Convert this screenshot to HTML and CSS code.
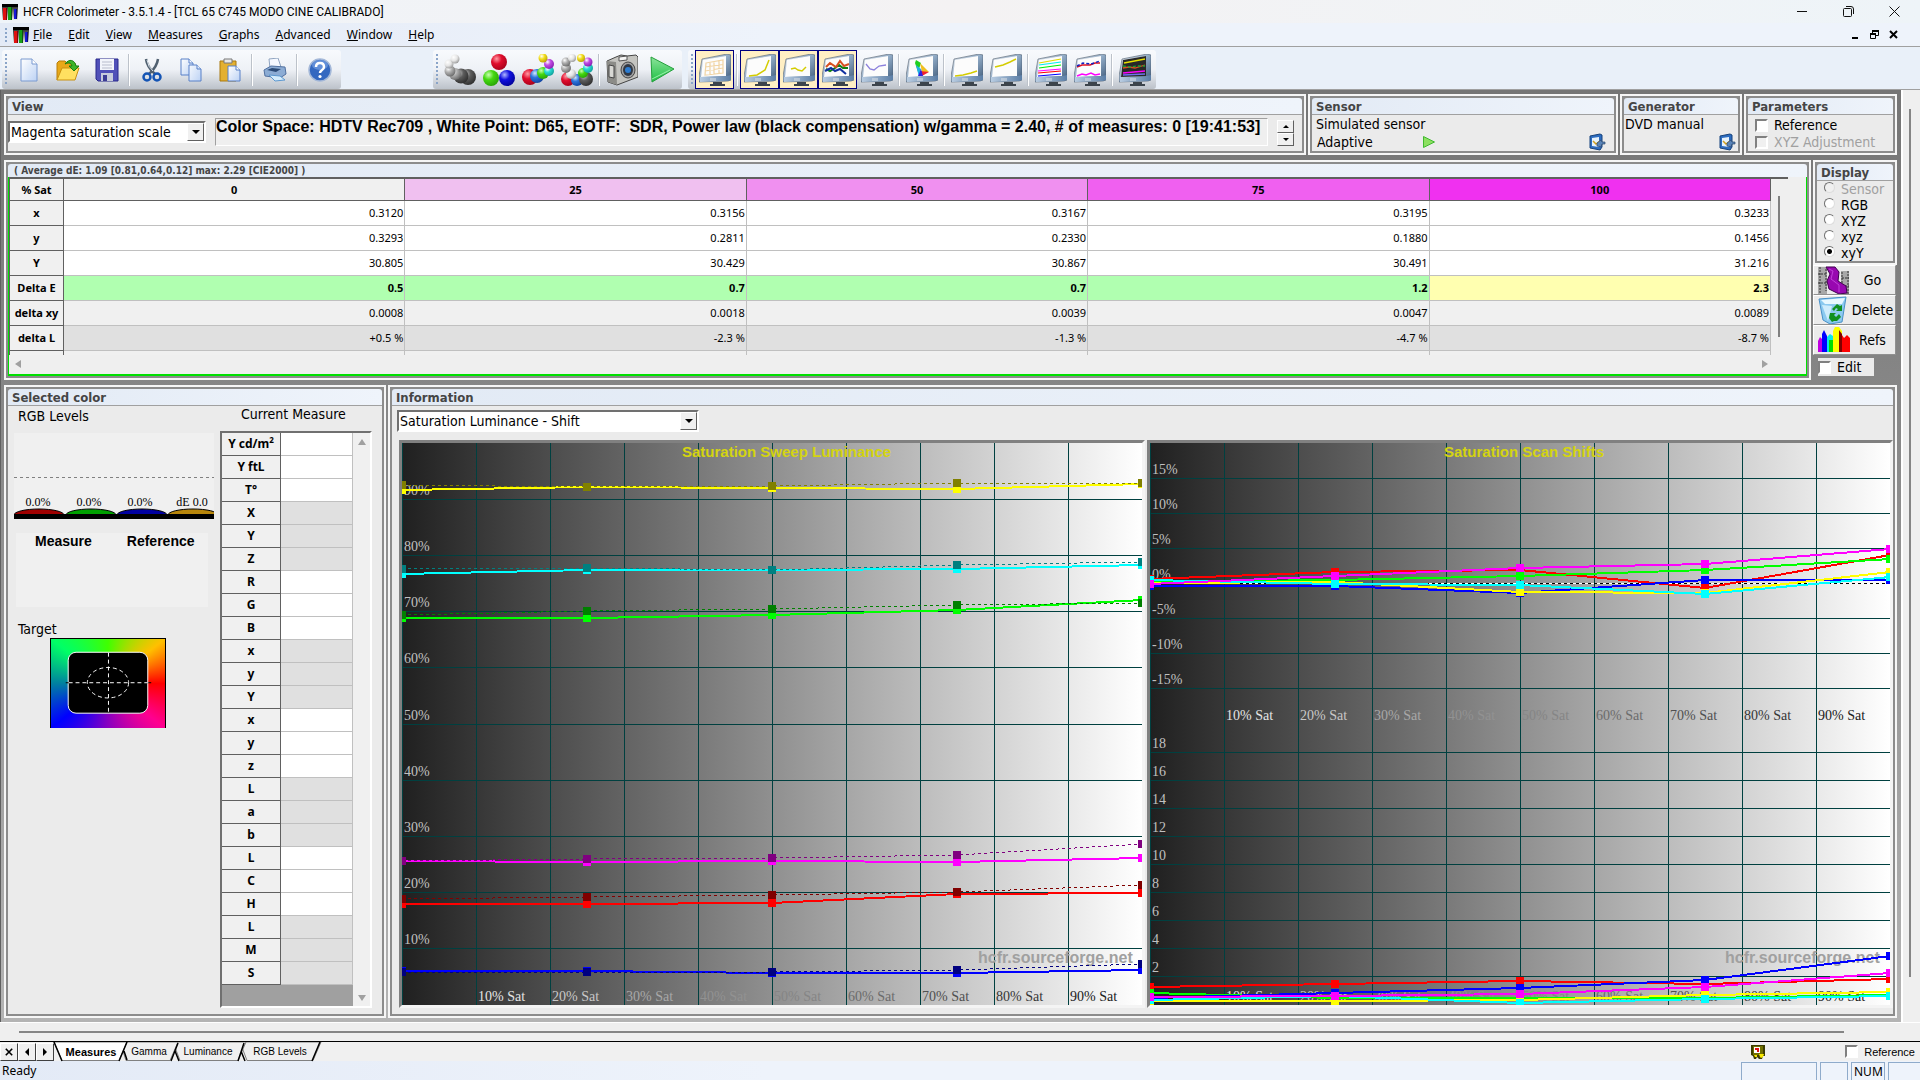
FILE: index.html
```html
<!DOCTYPE html>
<html lang="en">
<head>
<meta charset="utf-8">
<title>HCFR Colorimeter - 3.5.1.4</title>
<link rel="stylesheet" href="styles.css">
</head>
<body>
<svg class="defs" aria-hidden="true">
  <defs>
    <linearGradient id="gBezel" x1="0" y1="0" x2="1" y2="1"><stop offset="0" stop-color="#e8ecf0"/><stop offset=".5" stop-color="#8fa9c4"/><stop offset="1" stop-color="#3c5878"/></linearGradient>
    <linearGradient id="gBase" x1="0" y1="0" x2="1" y2="0"><stop offset="0" stop-color="#b9cde2"/><stop offset="1" stop-color="#5b7ea6"/></linearGradient>
    <linearGradient id="gPage" x1="0" y1="0" x2="1" y2="1"><stop offset="0" stop-color="#fff"/><stop offset="1" stop-color="#bcd2f4"/></linearGradient>
    <linearGradient id="gPlay" x1="0" y1="0" x2="0" y2="1"><stop offset="0" stop-color="#8be39a"/><stop offset="1" stop-color="#1fc045"/></linearGradient>
    <radialGradient id="sGray" cx=".35" cy=".3" r=".8"><stop offset="0" stop-color="#fff"/><stop offset=".4" stop-color="#b0b0b0"/><stop offset="1" stop-color="#606060"/></radialGradient>
    <radialGradient id="sLight" cx=".35" cy=".3" r=".8"><stop offset="0" stop-color="#fff"/><stop offset=".5" stop-color="#e4e4e4"/><stop offset="1" stop-color="#8c8c8c"/></radialGradient>
    <radialGradient id="sDark" cx=".35" cy=".3" r=".8"><stop offset="0" stop-color="#c8c8c8"/><stop offset=".4" stop-color="#5c5c5c"/><stop offset="1" stop-color="#282828"/></radialGradient>
    <radialGradient id="sRed" cx=".35" cy=".3" r=".8"><stop offset="0" stop-color="#ff9aa4"/><stop offset=".4" stop-color="#e00c2c"/><stop offset="1" stop-color="#a00018"/></radialGradient>
    <radialGradient id="sGreen" cx=".35" cy=".3" r=".8"><stop offset="0" stop-color="#c8ffb0"/><stop offset=".4" stop-color="#44d810"/><stop offset="1" stop-color="#249c04"/></radialGradient>
    <radialGradient id="sBlue" cx=".35" cy=".3" r=".8"><stop offset="0" stop-color="#b0b8ff"/><stop offset=".4" stop-color="#1010e0"/><stop offset="1" stop-color="#000090"/></radialGradient>
    <radialGradient id="sSky" cx=".35" cy=".3" r=".8"><stop offset="0" stop-color="#d4e8ff"/><stop offset=".4" stop-color="#2c74dc"/><stop offset="1" stop-color="#0c3c98"/></radialGradient>
    <radialGradient id="sYellow" cx=".35" cy=".3" r=".8"><stop offset="0" stop-color="#fff"/><stop offset=".4" stop-color="#f4e020"/><stop offset="1" stop-color="#b09800"/></radialGradient>
    <radialGradient id="sViolet" cx=".35" cy=".3" r=".8"><stop offset="0" stop-color="#fff"/><stop offset=".4" stop-color="#c04ce4"/><stop offset="1" stop-color="#8018a8"/></radialGradient>
    <radialGradient id="sCyan" cx=".35" cy=".3" r=".8"><stop offset="0" stop-color="#fff"/><stop offset=".4" stop-color="#28dcd4"/><stop offset="1" stop-color="#0c9490"/></radialGradient>
    <linearGradient id="gLogo" x1="0" y1="0" x2="0" y2="1"><stop offset="0" stop-color="#111"/><stop offset=".5" stop-color="#777"/><stop offset="1" stop-color="#f0f0f0"/></linearGradient>
    <symbol id="logo" viewBox="0 0 16 16"><path fill="url(#gLogo)" d="M0 0h16v16H0z"/><path fill="#000" d="M0 0h16v3H0z"/><path fill="#e01010" d="M1 4h4v12H1z"/><path fill="#18a018" d="M6 3h4v13H6z"/><path fill="#1818d8" d="M12 5h3v10h-3z"/><path fill="#000" opacity=".45" d="M4 4h1v12H4zM9 3h1v13H9zM14 5h1v10h-1z"/></symbol>
    <symbol id="monitor" viewBox="0 0 32 32"><path d="M3 5 28 0l4 1v25l-3 1-29 1v-6z" fill="url(#gBezel)" stroke="#52606e" stroke-width=".6"/><path d="m4 6 23-4v20L2 23z" fill="#fcfcfc"/><path d="m1 23 27-1 4-1v5l-3 1-28 1z" fill="url(#gBase)"/><path d="M11 24h6v3h-6z" fill="#e0e4e8" opacity=".5"/><path d="M14 28h9v2h3v2H11v-2h3z" fill="#3c444c"/></symbol>
    <symbol id="config" viewBox="0 0 18 18"><path d="m2 3 10-2 2 1v12l-2 3-10-2z" fill="#2c6cc0" stroke="#16427c"/><path d="m4 5 7-1v10l-7-1z" fill="#e6f2fc"/><path d="m5 8 3 3 4-3" fill="none" stroke="#d0a020" stroke-width="1.500"/><path d="m9 10 4-3 1 2h3v2h-3l-1 3-4-1z" fill="#5a84b8" stroke="#2c486c" stroke-width=".7"/></symbol>
  </defs>
</svg>

<div class="app">
  <header class="titlebar">
    <svg class="logo"><use href="#logo"/></svg>
    <h1>HCFR Colorimeter - 3.5.1.4 - [TCL 65 C745 MODO CINE CALIBRADO]</h1>
    <div class="caption">
      <button aria-label="Minimize"><svg viewBox="0 0 11 11"><path d="M0 5.500h10" stroke="#111"/></svg></button>
      <button aria-label="Restore"><svg viewBox="0 0 11 11"><g fill="none" stroke="#111"><rect x=".5" y="2.500" width="8" height="8" rx="1"/><path d="M3 .5h5q2.500 0 2.500 2.500v5"/></g></svg></button>
      <button aria-label="Close"><svg viewBox="0 0 11 11"><path d="m.5.5 10 10m0-10-10 10" stroke="#111"/></svg></button>
    </div>
  </header>

  <nav class="menubar">
    <span class="grip"></span><svg class="logo"><use href="#logo"/></svg>
    <button><u>F</u>ile</button><button><u>E</u>dit</button><button><u>V</u>iew</button><button><u>M</u>easures</button><button><u>G</u>raphs</button><button><u>A</u>dvanced</button><button><u>W</u>indow</button><button><u>H</u>elp</button>
    <div class="mdi-controls">
      <button aria-label="Minimize document"><svg viewBox="0 0 9 10"><path d="M1 8h6" stroke="#000" stroke-width="2"/></svg></button>
      <button aria-label="Restore document"><svg viewBox="0 0 9 10"><g fill="none" stroke="#000"><path d="M.5 4.500h5v4h-5zM2.500 4V1.500h6v4H6"/><path d="M0 4h6M2 1h7" stroke-width="2"/></g></svg></button>
      <button aria-label="Close document"><svg viewBox="0 0 9 10"><path d="m1 1 7 7m0-7L1 8" stroke="#000" stroke-width="2"/></svg></button>
    </div>
  </nav>

  <div class="toolbars">
    <div class="toolbar file">
      <span class="grip"></span>
      <button aria-label="New"><svg viewBox="0 0 24 24"><path d="M4 1h11l5 5v17H4z" fill="url(#gPage)" stroke="#7a9ad0"/><path d="M15 1v5h5" fill="#fff" stroke="#7a9ad0"/></svg></button>
      <button aria-label="Open"><svg viewBox="0 0 24 24"><path d="M1 22V5l2-2h6l2 2h8v5" fill="#e8a818" stroke="#b87c08"/><path d="m1 22 5-12h17l-4 12z" fill="#ffe060" stroke="#c89010"/><path d="M9 6c4-6 10-4 11 2h3l-5 5-5-5h3c-1-3-3-4-7-2z" fill="#3cb428" stroke="#187c10"/></svg></button>
      <button aria-label="Save"><svg viewBox="0 0 24 24"><path d="M1 1h22v22H3l-2-2z" fill="#5050b8" stroke="#28288c"/><path d="M5 1h14v11H5z" fill="#f2f4fa"/><path d="M7 4h10M7 7h10M7 10h10" stroke="#b8bccc"/><path d="M6 15h12v8H6z" fill="#c8ccdc"/><path d="M8 17h4v6H8z" fill="#3c3c94"/></svg></button>
      <i class="sep"></i>
      <button aria-label="Cut"><svg viewBox="0 0 24 24"><path d="M6 1q1 8 9 15M18 1q-1 8-9 15" stroke="#506070" stroke-width="2.500" fill="none"/><path d="M7 2q1 7 6 11" stroke="#dce4ec" fill="none"/><circle cx="7" cy="19" r="3.500" fill="none" stroke="#1454b4" stroke-width="2.500"/><circle cx="17" cy="19" r="3.500" fill="none" stroke="#1454b4" stroke-width="2.500"/></svg></button>
      <button aria-label="Copy"><svg viewBox="0 0 24 24"><g fill="url(#gPage)" stroke="#5880c8"><path d="M2 1h8l4 4v12H2z"/><path d="M10 1v4h4M10 7h8l4 4v12H10z"/><path d="M18 7v4h4"/></g></svg></button>
      <button aria-label="Paste"><svg viewBox="0 0 24 24"><path d="M2 3h16v20H2z" fill="#e4b030" stroke="#a87810"/><path d="M6 1h8v4H6z" fill="#e8e8e8" stroke="#787878"/><path d="M10 8h8l4 4v11H10z" fill="url(#gPage)" stroke="#5880c8"/><path d="M18 8v4h4" fill="#fff" stroke="#5880c8"/></svg></button>
      <i class="sep"></i>
      <button aria-label="Print"><svg viewBox="0 0 24 24"><path d="m7 10-1-9 9-1 3 9z" fill="#f4f8ff" stroke="#90a4c0"/><path d="m1 12 7-4 14 1 1 7-6 4-15-2z" fill="#8cacd4" stroke="#5070a0"/><path d="m4 12 5-2 9 1-5 3z" fill="#2c4c78"/><path d="m6 17 11 1 5 4-10 1z" fill="#d4ecfc" stroke="#5c98d0"/></svg></button>
      <i class="sep"></i>
      <button aria-label="Help"><svg viewBox="0 0 24 24"><circle cx="12" cy="12" r="11" fill="#3468c0" stroke="#a4b8d8" stroke-width="1.500"/><ellipse cx="12" cy="7" rx="8" ry="5" fill="#80a8e8" opacity=".6"/><path d="M8 9q0-4 4-4t4 4q0 2-2.500 3.500Q12 13.500 12 15" fill="none" stroke="#fff" stroke-width="2.500"/><circle cx="12" cy="18.500" r="1.600" fill="#fff"/></svg></button>
    </div>
    <div class="toolbar measure">
      <span class="grip"></span>
      <button aria-label="Measure grays"><svg viewBox="0 0 32 32"><circle cx="24" cy="23" r="8" fill="url(#sDark)"/><circle cx="17" cy="22" r="7.500" fill="url(#sDark)"/><circle cx="11" cy="20" r="6" fill="url(#sGray)"/><circle cx="6" cy="17" r="5.500" fill="url(#sGray)"/><circle cx="5" cy="10" r="4.500" fill="url(#sLight)"/><circle cx="11" cy="5" r="4.500" fill="url(#sLight)"/></svg></button>
      <button aria-label="Measure primaries"><svg viewBox="0 0 32 32"><circle cx="16" cy="8" r="8" fill="url(#sRed)"/><circle cx="8" cy="24" r="8" fill="url(#sGreen)"/><circle cx="24" cy="24" r="8" fill="url(#sBlue)"/></svg></button>
      <button aria-label="Measure primaries and secondaries"><svg viewBox="0 0 32 32"><circle cx="8" cy="23" r="8" fill="url(#sRed)"/><circle cx="15" cy="22" r="7" fill="url(#sSky)"/><circle cx="21" cy="19" r="6" fill="url(#sGreen)"/><circle cx="27" cy="17" r="5" fill="url(#sCyan)"/><circle cx="27" cy="10" r="5" fill="url(#sViolet)"/><circle cx="21" cy="4" r="4.500" fill="url(#sYellow)"/></svg></button>
      <button aria-label="Measure full set"><svg viewBox="0 0 32 32"><circle cx="7" cy="25" r="7" fill="url(#sRed)"/><circle cx="16" cy="26" r="6" fill="url(#sSky)"/><circle cx="25" cy="25" r="7" fill="url(#sDark)"/><circle cx="22" cy="19" r="5" fill="url(#sGreen)"/><circle cx="10" cy="20" r="5" fill="url(#sLight)"/><circle cx="5" cy="14" r="5" fill="url(#sGray)"/><circle cx="5" cy="8" r="4.500" fill="url(#sGray)"/><circle cx="11" cy="4" r="4" fill="url(#sLight)"/><circle cx="27" cy="14" r="5" fill="url(#sCyan)"/><circle cx="27" cy="8" r="4.500" fill="url(#sViolet)"/><circle cx="20" cy="4" r="4" fill="url(#sYellow)"/></svg></button>
      <i class="sep"></i>
      <button aria-label="Camera"><svg viewBox="0 0 32 32"><path d="m1 7 9-4 5-2 6 1 9-1 2 2v20L11 31l-9-3z" fill="#c4c4c0" stroke="#444"/><path d="m1 7 9 1 1 23-9-3z" fill="#8c8c88"/><path d="m3 11 5 1v12l-5-1z" fill="#d8d8d4" stroke="#444"/><path d="m13 3 8-1v4l-8 1z" fill="#f4f4f4" stroke="#555"/><ellipse cx="22" cy="16" rx="7" ry="8" fill="#a0a0a0" stroke="#444"/><ellipse cx="22" cy="16" rx="5" ry="6" fill="#303844"/><circle cx="22" cy="16" r="3" fill="#2c7cd0"/></svg></button>
      <button aria-label="Run measures"><svg viewBox="0 0 32 32"><path d="M6 3 29 15 7 28z" fill="url(#gPlay)" stroke="#24a03c"/><path d="m7 25 18-9" stroke="#98f0a8"/></svg></button>
    </div>
    <div class="toolbar graphs">
      <span class="grip"></span>
      <button class="on" aria-label="Measures table"><svg viewBox="0 0 32 32"><use href="#monitor"/><path d="m7 9 17-3v13L6 21zM6.500 13 24 10.500M6 17l18-3M11 8v13m4-14v13m5-14v13" fill="none" stroke="#f0d4a4" stroke-width="1.200"/></svg></button>
      <i class="sep"></i>
      <button class="on" aria-label="Luminance"><svg viewBox="0 0 32 32"><use href="#monitor"/><path d="m5 22 8-1 8-5 4-10" fill="none" stroke="#d4cc00" stroke-width="1.500"/></svg></button>
      <button class="on" aria-label="Gamma"><svg viewBox="0 0 32 32"><use href="#monitor"/><path d="m8 15 4-1 3 2 4 1 4-4" fill="none" stroke="#d4cc00" stroke-width="1.500"/></svg></button>
      <button class="on" aria-label="RGB levels"><svg viewBox="0 0 32 32"><use href="#monitor"/><g fill="none" stroke-width="2"><path d="m4 15 4 2 5-3 4-3 4 3h5" stroke="#108010"/><path d="m4 13 4-4 6 4 4-6 4 5 5-2" stroke="#d85020"/><path d="m3 17 6-3 4 3 5-2 6 5" stroke="#1030a0"/></g></svg></button>
      <button aria-label="Color temperature"><svg viewBox="0 0 32 32"><use href="#monitor"/><path d="m5 10 4 5 4 1 5-4 7-1" fill="none" stroke="#8c80dc" stroke-width="1.300"/></svg></button>
      <i class="sep"></i>
      <button aria-label="CIE diagram"><svg viewBox="0 0 32 32"><use href="#monitor"/><path d="m9 9 1-3 5 3-3 9z" fill="#20d020"/><path d="m14 9 9 9-7 0z" fill="#f0c020"/><path d="m23 18-7 4-2-5z" fill="#f02030"/><path d="m10 11 5 4-2 8z" fill="#20b0e8"/><path d="m15 15-3 7 5 0z" fill="#3020e0"/></svg></button>
      <i class="sep"></i>
      <button aria-label="Near black"><svg viewBox="0 0 32 32"><use href="#monitor"/><path d="m4 22 8-1 8-2 6-2" fill="none" stroke="#d4cc00" stroke-width="1.500"/></svg></button>
      <button aria-label="Near white"><svg viewBox="0 0 32 32"><use href="#monitor"/><path d="m5 13 8-2 7-3 6-3" fill="none" stroke="#d4cc00" stroke-width="1.500"/></svg></button>
      <i class="sep"></i>
      <button aria-label="Saturation luminance"><svg viewBox="0 0 32 32"><use href="#monitor"/><g fill="none" stroke-width="1.200"><path d="m4 9 22-4" stroke="#e0d800"/><path d="m4 11 22-3" stroke="#0ee"/><path d="m4 14 22-3" stroke="#0e0"/><path d="m3 17 23-2" stroke="#f0f"/><path d="m3 19 23-2" stroke="#f00"/><path d="m3 22 23-2" stroke="#00f"/></g></svg></button>
      <button aria-label="Saturation shift"><svg viewBox="0 0 32 32"><use href="#monitor"/><g fill="none" stroke-width="1.500"><path d="m3 13 5-2 8 0 5-2h5" stroke="#e01020"/><path d="m3 12 6-3 8 1 9-3" stroke="#1020c0" stroke-dasharray="3 2"/><path d="m3 22 5-2 4 1 5-2 4 2 5-1" stroke="#f0f"/></g></svg></button>
      <i class="sep"></i>
      <button aria-label="Measures combo"><svg viewBox="0 0 32 32"><use href="#monitor"/><path d="m4 6 23-4v20L2 23z" fill="#282828"/><g fill="none" stroke-width="1.300"><path d="m5 9 21-4" stroke="#e8e000"/><path d="m4 14 6-1 6 1 10-3" stroke="#d85020"/><path d="m4 12 7 1 7-1 8 0" stroke="#18a030" stroke-dasharray="3 2"/><path d="m4 19 22-2" stroke="#f0f"/><path d="m4 21 22-1" stroke="#7070f0"/></g></svg></button>
    </div>
  </div>

  <main class="mdi">
    <div class="workspace">
      <div class="row top">
        <section class="panel view">
          <h2>View</h2>
          <div class="body view-body">
            <label class="combo scale"><select aria-label="Measure view"><option>Magenta saturation scale</option></select><span class="arrow"></span></label>
            <input class="info-line" aria-label="Settings" readonly value="Color Space: HDTV Rec709 , White Point: D65, EOTF:  SDR, Power law (black compensation) w/gamma = 2.40, # of measures: 0 [19:41:53]">
            <div class="spin"><button aria-label="Up"><i class="tri up"></i></button><button aria-label="Down"><i class="tri down"></i></button></div>
          </div>
        </section>
        <section class="panel sensor">
          <h2>Sensor</h2>
          <div class="body dev">
            <p>Simulated sensor</p>
            <div class="devrow"><span>Adaptive</span><svg class="run" viewBox="0 0 12 12"><path d="m.5.5 11 5.500-11 5.500z" fill="#8ce060" stroke="#40b830"/></svg><button class="cfg" aria-label="Configure sensor"><svg><use href="#config"/></svg></button></div>
          </div>
        </section>
        <section class="panel generator">
          <h2>Generator</h2>
          <div class="body dev">
            <p>DVD manual</p>
            <div class="devrow"><button class="cfg" aria-label="Configure generator"><svg><use href="#config"/></svg></button></div>
          </div>
        </section>
        <section class="panel params">
          <h2>Parameters</h2>
          <div class="body checks">
            <label><input type="checkbox">Reference</label>
            <label class="off"><input type="checkbox" disabled>XYZ Adjustment</label>
          </div>
        </section>
      </div>

      <div class="row middle">
        <section class="panel grid-panel">
          <h2>( Average dE: 1.09 [0.81,0.64,0.12] max: 2.29 [CIE2000] )</h2>
          <div class="grid-wrap">
            <div class="grid-main">
              <div class="grid-scroll">
              <table class="measures">
                <thead><tr><th class="lab">% Sat</th><th class="s0">0</th><th class="s25">25</th><th class="s50">50</th><th class="s75">75</th><th class="s100">100</th></tr></thead>
                <tbody>
                  <tr><th>x</th><td>0.3120</td><td>0.3156</td><td>0.3167</td><td>0.3195</td><td>0.3233</td></tr>
                  <tr><th>y</th><td>0.3293</td><td>0.2811</td><td>0.2330</td><td>0.1880</td><td>0.1456</td></tr>
                  <tr><th>Y</th><td>30.805</td><td>30.429</td><td>30.867</td><td>30.491</td><td>31.216</td></tr>
                  <tr class="de"><th>Delta E</th><td>0.5</td><td>0.7</td><td>0.7</td><td>1.2</td><td class="warn">2.3</td></tr>
                  <tr class="g1"><th>delta xy</th><td>0.0008</td><td>0.0018</td><td>0.0039</td><td>0.0047</td><td>0.0089</td></tr>
                  <tr class="g2"><th>delta L</th><td>+0.5 %</td><td>-2.3 %</td><td>-1.3 %</td><td>-4.7 %</td><td>-8.7 %</td></tr>
                  <tr class="g1"><th></th><td></td><td></td><td></td><td></td><td></td></tr>
                </tbody>
              </table>
              </div>
              <div class="vbar"><i></i></div>
            </div>
            <div class="hbar"><i class="al"></i><i class="ar"></i></div>
          </div>
        </section>
        <div class="side">
          <section class="panel">
            <h2>Display</h2>
            <div class="body radios">
              <label class="off"><input type="radio" name="disp" disabled>Sensor</label>
              <label><input type="radio" name="disp">RGB</label>
              <label><input type="radio" name="disp">XYZ</label>
              <label><input type="radio" name="disp">xyz</label>
              <label><input type="radio" name="disp" checked>xyY</label>
            </div>
          </section>
          <div class="actions">
            <button><svg viewBox="0 0 32 28"><path d="M0 1h9v27H0zM23 5h8v23h-8z" fill="#a8a8a8"/><path d="M2 1v27M8 3v22M24 6v21M30 5v23M0 8h8M0 17h8M24 12h7M24 20h7" stroke="#333" stroke-dasharray="2 1"/><path d="m8 1 9 0 4 5-1 9 8 5 1 7-8 1-10-5-2-8 3-7z" fill="#9808b0" stroke="#400050"/><path d="m11 3 4 2-2 8 8 6 0 7" fill="none" stroke="#c040d8"/></svg><span>Go</span></button>
            <button><svg viewBox="0 0 32 28"><path d="m1 3 27-2-4 25-12 2-7-4z" fill="#8ccaf0" stroke="#4890c8"/><path d="m3 4 24-2-3 6-17 0z" fill="#e8f8ff"/><path d="m4 9 10 1-4 15z" fill="#e0f4ff" opacity=".8"/><path d="m14 13 5-5 3 2 2-1v6h-6l2-2-2-1-2 3zM12 17h6l-2 2 2 2 3-3 2 3-4 4-3 0-2 1-3-4z" fill="#109020"/></svg><span>Delete</span></button>
            <button><svg viewBox="0 0 32 28"><path d="M0 26V15l2-4 2 2v13z" fill="#c000e0"/><path d="M4 26V8l2-4 3 6v16z" fill="#00f"/><path d="M9 26V11l3-3 3 2v16z" fill="#0ce8e8"/><path d="M11 26V14h4v12z" fill="#0d0"/><path d="M15 26V5l2-4h4l3 4v21z" fill="#ff0"/><path d="M21 26V4l3 4v18z" fill="#800000"/><path d="M24 26V9l2 3 3-3 3 3v14z" fill="#f00"/></svg><span>Refs</span></button>
          </div>
          <label class="edit"><input type="checkbox">Edit</label>
        </div>
      </div>

      <div class="row bottom">
        <section class="panel selected">
          <h2>Selected color</h2>
          <div class="body sel-body">
            <div class="sel-left">
              <p class="lbl">RGB Levels</p>
              <svg class="levels" viewBox="0 0 200 86">
                <path d="M0 44.500h200" stroke="#808080" stroke-dasharray="3 3"/>
                <g stroke="#000"><ellipse cx="25" cy="82" rx="25" ry="6" fill="#a00000"/><ellipse cx="77" cy="82" rx="25" ry="6" fill="#00a000"/><ellipse cx="128" cy="82" rx="25" ry="6" fill="#0000a0"/><ellipse cx="179" cy="82" rx="25" ry="6" fill="#b8860b"/></g>
                <path d="M0 81h200v5H0z"/>
                <g class="lv"><text x="24" y="73">0.0%</text><text x="75" y="73">0.0%</text><text x="126" y="73">0.0%</text><text x="178" y="73">dE 0.0</text></g>
              </svg>
              <div class="compare"><b>Measure</b><b>Reference</b></div>
              <p class="lbl tgt">Target</p>
              <div class="target">
                <svg viewBox="0 0 116 89"><rect x="17.500" y="13.500" width="81" height="62" rx="8" stroke="#fff"/><path d="M15 44.500h87" stroke="#000"/><g fill="none" stroke="#fff" stroke-dasharray="4 3"><path d="M18 44.500h81M58.500 14v62"/><ellipse cx="58" cy="44.500" rx="21" ry="15.500"/></g></svg>
              </div>
            </div>
            <div class="sel-right">
              <p class="lbl cur">Current Measure</p>
              <div class="cm-wrap">
                <div class="cm-table">
                  <table>
                    <tbody>
                      <tr><th>Y cd/m<sup>2</sup></th><td></td></tr><tr><th>Y ftL</th><td></td></tr><tr><th>T°</th><td></td></tr>
                      <tr class="g"><th>X</th><td></td></tr><tr class="g"><th>Y</th><td></td></tr><tr class="g"><th>Z</th><td></td></tr>
                      <tr><th>R</th><td></td></tr><tr><th>G</th><td></td></tr><tr><th>B</th><td></td></tr>
                      <tr class="g"><th>x</th><td></td></tr><tr class="g"><th>y</th><td></td></tr><tr class="g"><th>Y</th><td></td></tr>
                      <tr><th>x</th><td></td></tr><tr><th>y</th><td></td></tr><tr><th>z</th><td></td></tr>
                      <tr class="g"><th>L</th><td></td></tr><tr class="g"><th>a</th><td></td></tr><tr class="g"><th>b</th><td></td></tr>
                      <tr><th>L</th><td></td></tr><tr><th>C</th><td></td></tr><tr><th>H</th><td></td></tr>
                      <tr class="g"><th>L</th><td></td></tr><tr class="g"><th>M</th><td></td></tr><tr class="g"><th>S</th><td></td></tr>
                    </tbody>
                  </table>
                </div>
                <div class="cm-bar"><i class="tri up"></i><i class="tri down"></i></div>
              </div>
            </div>
          </div>
        </section>
        <section class="panel information">
          <h2>Information</h2>
          <div class="body info-body">
            <label class="combo mode"><select aria-label="Information view"><option>Saturation Luminance - Shift</option></select><span class="arrow"></span></label>
            <div class="charts">
              <figure class="chart" id="luminance"></figure>
              <figure class="chart" id="shifts"></figure>
            </div>
          </div>
        </section>
      </div>
    </div>
    <div class="mdi-v"><i></i></div>
    <div class="mdi-h"><i></i></div>
  </main>

  <nav class="tabs">
    <svg class="tabshape" viewBox="0 0 330 20" aria-hidden="true">
      <g fill="#f0f0f0" stroke="#808080"><path d="M240 0 247 18.500H313L321 0z"/><path d="M173 0 180 18.500H238L246 0z"/><path d="M120 0 126 18.500H170L178 0z"/></g>
      <path d="M54 0 62 18.500H119L127 0z" fill="#fff" stroke="#808080"/>
      <path d="m54 0 8 19m57 0 8-19M124 9l3 9m44 1 7-18m-3 8 4 10m59 0 6-18m-3 8 4 10m67 0 8-19" stroke="#000" stroke-width="1.500" fill="none"/>
    </svg>
    <button class="nb" aria-label="Close tab"><svg viewBox="0 0 10 10"><path d="m1 1 8 8m0-8L1 9" stroke="#000" stroke-width="2"/></svg></button><button class="nb" aria-label="Previous tab"><i class="tri left"></i></button><button class="nb" aria-label="Next tab"><i class="tri right"></i></button>
    <button class="tab t1">Measures</button><button class="tab t2">Gamma</button><button class="tab t3">Luminance</button><button class="tab t4">RGB Levels</button>
    <svg class="badge" viewBox="0 0 14 14"><path d="M0 0h14v11l-2 0-1 3H8l-2-2-1 2H3l-1-3-2-1z" fill="#3c3c00"/><path d="M2 1h10v9H2z" fill="#707000"/><path d="M3 2h6v6H3z" fill="#fff"/><path d="m4 3h4v4H6V5H4z" fill="#e01010"/><path d="M3 10h3v2H4zM8 9h5l-1 3-2 1-1-1z" fill="#f8e800"/></svg>
    <label class="refbox"><input type="checkbox">Reference</label>
  </nav>

  <footer class="status">
    <span class="ready">Ready</span><span class="pane p1"></span><span class="pane p2"></span><span class="pane p3">NUM</span><span class="pane p4"></span>
  </footer>
</div>
<script src="charts.js"></script>
</body>
</html>
```
FILE: charts.js
```javascript
// Both plots share a 740 x 562 drawing area; samples sit at 0, 25, 50, 75 and 100 % saturation.
const W = 740, H = 562, XS = [0, 185, 370, 555, 740];
const SAT_COLORS = ['#e4e4e4', '#c8c8c8', '#a8a8a8', '#929292', '#858585', '#6c6c6c', '#505050', '#363636', '#202020'];

function series(ys, color, dashed) {
  const points = ys.map((y, i) => XS[i] + ',' + y).join(' ');
  const marks = ys.map((y, i) => `<rect x="${XS[i] - 4}" y="${y - 4}" width="8" height="8" fill="${color}"/>`).join('');
  return `<polyline points="${points}" fill="none" stroke="${color}" stroke-width="${dashed ? 1 : 2}"${dashed ? ' stroke-dasharray="3 3"' : ''}/>${marks}`;
}

function grid(ys) {
  let d = '';
  for (let i = 0; i < 10; i++) d += `M${i * 74 + 0.5} 0V${H}`;
  ys.forEach(y => { d += `M0 ${y + 0.5}H${W}`; });
  return `<path d="${d}" stroke="#004040"/>`;
}

function label(x, y, text, cls, fill) {
  return `<text x="${x / W * 100}%" y="${y / H * 100}%" class="${cls}"${fill ? ` fill="${fill}"` : ''}>${text}</text>`;
}

function satLabels(y) {
  return SAT_COLORS.map((c, i) => label((i + 1) * 74 + 2, y, (i + 1) * 10 + '% Sat', 'ax', c)).join('');
}

function draw(id, lines, gridRows, texts) {
  document.getElementById(id).innerHTML =
    `<svg width="100%" height="100%">
      <svg viewBox="0 0 ${W} ${H}" width="100%" height="100%" preserveAspectRatio="none" shape-rendering="crispEdges">${grid(gridRows)}</svg>
      ${texts}
      <svg viewBox="0 0 ${W} ${H}" width="100%" height="100%" preserveAspectRatio="none" shape-rendering="crispEdges">${lines}</svg>
    </svg>`;
}

const rows = [56, 112, 168, 224, 281, 337, 393, 449, 505];
draw('luminance',
  series([461, 461, 460, 451, 450], '#ff0000') + series([175, 175, 172, 167, 157], '#00ff00') +
  series([528, 528, 530, 530, 527], '#0000ff') + series([47, 44, 45, 46, 41], '#ffff00') +
  series([131, 127, 127, 126, 122], '#00ffff') + series([418, 419, 418, 419, 415], '#ff00ff') +
  series([456, 454, 452, 449, 442], '#800000', true) + series([172, 168, 166, 162, 160], '#008000', true) +
  series([529, 529, 529, 527, 521], '#000080', true) + series([42, 44, 43, 40, 40], '#808000', true) +
  series([126, 125, 127, 122, 119], '#008080', true) + series([418, 416, 415, 412, 401], '#800080', true),
  rows,
  label(280, 14, 'Saturation Sweep Luminance', 'title') +
  rows.map((y, i) => label(2, y - 4, (90 - i * 10) + '%', 'ax', '#c0c0c0')).join('') +
  satLabels(558) + label(576, 520, 'hcfr.sourceforge.net', 'mark'));

const pct = [35, 70, 105, 140, 175, 210, 245];
const de = [309, 337, 365, 393, 421, 449, 477, 505, 533];
draw('shifts',
  '<path d="M0 140.500H740" stroke="#fff"/><path d="M0 140.500H740" stroke="#000" stroke-dasharray="3 3"/>' +
  series([136, 129, 127, 145, 112], '#ff0000') + series([139, 137, 133, 127, 116], '#00ff00') +
  series([143, 143, 150, 137, 137], '#0000ff') + series([140, 139, 149, 150, 129], '#ffff00') +
  series([137, 141, 142, 151, 134], '#00ffff') + series([141, 133, 125, 121, 106], '#ff00ff') +
  series([544, 541, 538, 541, 536], '#ff0000') + series([550, 555, 555, 555, 552], '#00ff00') +
  series([555, 550, 545, 537, 513], '#0000ff') + series([558, 558, 557, 552, 549], '#ffff00') +
  series([557, 553, 560, 556, 553], '#00ffff') + series([554, 553, 551, 544, 530], '#ff00ff'),
  pct.filter(y => y !== 140).concat(de),
  label(294, 14, 'Saturation Scan Shifts', 'title') +
  pct.map((y, i) => label(2, y - 4, (15 - i * 5) + '%', 'ax', '#c0c0c0')).join('') +
  de.map((y, i) => label(2, y - 4, 18 - i * 2, 'ax', '#c0c0c0')).join('') +
  satLabels(277) + satLabels(558) + label(575, 520, 'hcfr.sourceforge.net', 'mark'));
```
FILE: styles.css
```css
* { box-sizing: border-box; }
body { margin: 0; font: 14px/16px "DejaVu Sans Condensed", "DejaVu Sans", sans-serif; color: #000; overflow: hidden; }
h1, h2, p, figure { margin: 0; font-weight: normal; }
button { font: inherit; color: inherit; padding: 0; border: 0; background: none; }
.defs { position: absolute; width: 0; height: 0; }
.app { display: flex; flex-direction: column; height: 100vh; background: #eef3fb; }

.titlebar { display: flex; align-items: center; height: 23px; padding-left: 2px; background: linear-gradient(90deg, #eff4f9, #f4f2f3 50%, #eef4f8); }
.titlebar h1 { flex: 1; margin-left: 5px; font: 12px/18px Roboto, "Noto Sans", sans-serif; }
.logo { width: 16px; height: 16px; }
.caption { display: flex; gap: 35px; padding-right: 20px; }
.caption svg { display: block; width: 11px; height: 11px; }

.menubar { display: flex; align-items: center; height: 24px; padding-left: 5px; background: linear-gradient(90deg, #e3eaf6, #eef3fb 40%); border-bottom: 1px solid #a0a0a0; box-shadow: 0 1px #fff; font: 12px/18px "Noto Sans", sans-serif; }
.menubar > button { padding: 0 8px; }
.menubar > .logo { margin: 0 -4px 0 6px; }
.grip { width: 2px; height: 14px; background: repeating-linear-gradient(#8aa4c8 0 2px, transparent 2px 4px); }
.mdi-controls { display: flex; gap: 10px; margin-left: auto; padding-right: 22px; }
.mdi-controls svg { display: block; width: 9px; height: 10px; }

.toolbars { display: flex; height: 43px; padding: 3px 0 0 2px; background: #e9f0f9; border-bottom: 1px solid #a0a0a0; }
.toolbar { display: flex; align-items: center; height: 39px; padding-right: 2px; border-radius: 3px; background: linear-gradient(#f8fafd, #eef1f6 50%, #bcc2ca); }
.toolbar .grip { height: 32px; margin: 0 2px 0 3px; }
.toolbar button { display: grid; place-items: center; width: 39px; height: 39px; }
.toolbar button svg { width: 32px; height: 32px; }
.file button svg { width: 24px; height: 24px; }
.measure { margin-left: 92px; }
.graphs { margin-left: 6px; }
.toolbar .on { background: #ffefc4; border: 1px solid #000080; }
.sep { width: 6px; height: 32px; border-left: 2px solid transparent; background: linear-gradient(90deg, transparent 0, #bcc2ca 0 1px, #fff 1px 2px, transparent 2px); }

.mdi { flex: 1; min-height: 0; display: grid; grid-template: minmax(0, 1fr) 19px / minmax(0, 1fr) 19px; background: #efefef; }
.workspace { display: flex; flex-direction: column; gap: 5px; padding: 4px 4px 4px 3px; border-left: 1px solid #606060; background: linear-gradient(#757575, #8a8a8a 40%, #b4b4b4); }
.mdi-v { border-left: 2px solid #fff; padding: 19px 7px 45px 6px; }
.mdi-v i, .mdi-h i { display: block; background: #858585; }
.mdi-v i { height: 100%; width: 2px; }
.mdi-h { grid-column: 1 / 3; border-top: 1px solid #fff; padding: 8px 76px 0 19px; }
.mdi-h i { height: 2px; }

.row { display: flex; gap: 2px; }
.panel { display: flex; flex-direction: column; border: 2px solid #f6f6f6; padding: 2px; background: #8c8c8c; }
.panel h2 { height: 17px; padding-left: 4px; border-bottom: 1px solid #a0a0a0; border-radius: 3px 3px 0 0; background: linear-gradient(90deg, #e2eaf5, #eff4fb); font: bold 13px/17px "DejaVu Sans Condensed", sans-serif; color: #454545; }
.body { flex: 1; min-height: 0; background: #ebebeb; }
.top { height: 61px; }
.view { flex: 1; }
.sensor { width: 310px; }
.generator { width: 122px; }
.params { width: 153px; }

.view-body { display: flex; align-items: flex-start; padding: 3px 8px 0 0; gap: 9px; }
.combo { position: relative; display: block; height: 22px; border: 2px solid; border-color: #707070 #fff #fff #707070; background: #fff; }
.combo select { width: 100%; height: 18px; padding: 0 1px; border: 0; appearance: none; background: #fff; font: inherit; font-size: 14px; color: #000; }
.arrow { position: absolute; top: 0; right: 0; width: 17px; height: 18px; border: 1px solid; border-color: #fff #606060 #606060 #fff; background: #f0f0f0; pointer-events: none; }
.arrow::after { content: ""; position: absolute; left: 4px; top: 6px; border: 4px solid transparent; border-top-color: #000; border-bottom: 0; }
.scale { width: 198px; margin-top: 3px; }
.info-line { flex: 1; min-width: 0; height: 28px; padding: 0 0 10px; border: 1px solid; border-color: #a0a0a0 #fff #fff #a0a0a0; background: #efefef; font: bold 16px/16px "Liberation Sans", Arial, sans-serif; color: #000; white-space: pre; }
.spin { width: 17px; margin-top: 2px; }
.spin button { display: grid; place-items: center; width: 17px; height: 13px; border: 1px solid; border-color: #fff #606060 #606060 #fff; background: #f0f0f0; }
.tri { width: 0; height: 0; border: 3px solid transparent; }
.tri.up { border-bottom: 3px solid #000; border-top: 0; }
.tri.down { border-top: 3px solid #000; border-bottom: 0; }
.tri.left { border: 4px solid transparent; border-right-color: #000; border-left: 0; }
.tri.right { border: 4px solid transparent; border-left-color: #000; border-right: 0; }

.dev { padding: 1px 8px 0 4px; }
.dev p { height: 17px; }
.generator .dev { padding-left: 1px; padding-right: 2px; }
.devrow { display: flex; align-items: center; height: 18px; padding-left: 1px; }
.devrow span { width: 106px; }
.run { width: 12px; height: 12px; }
.cfg { margin-left: auto; height: 18px; }
.cfg svg { display: block; width: 18px; height: 18px; }
.checks { display: flex; flex-direction: column; gap: 1px; padding: 2px 0 0 7px; }
.checks label, .radios label, .edit, .refbox { display: flex; align-items: center; gap: 6px; height: 16px; }
.off { color: #a0a0a0; }
input[type=checkbox] { appearance: none; width: 13px; height: 13px; margin: 0; border: 2px solid; border-color: #808080 #fff #fff #808080; background: #fff; }
.off input[type=checkbox] { background: #f0f0f0; }

.middle { height: 220px; }
.grid-panel { flex: 1; min-width: 0; }
.grid-panel h2 { height: 13px; line-height: 14px; font-size: 10px; padding-left: 6px; border-bottom: 0; }
.grid-wrap { flex: 1; min-height: 0; display: flex; flex-direction: column; padding: 0 18px 4px 0; background: #efefef; border: 1px solid #00e000; border-top: 0; border-bottom-width: 2px; }
.grid-main { display: flex; height: 178px; border: 1px solid #606060; border-width: 2px 0 0 1px; }
.grid-scroll { flex: 1; min-width: 0; overflow: hidden; }
table { border-collapse: separate; border-spacing: 0; table-layout: fixed; width: 100%; }
.measures { font: 11px/16px "Noto Sans", sans-serif; }
.measures th, .measures td { height: 25px; padding: 0 1px; border: 0 solid #c0c0c0; border-width: 0 1px 1px 0; overflow: hidden; white-space: nowrap; }
.measures td { text-align: right; background: #fff; }
.measures th { border-color: #606060; background: #f0f0f0; text-align: center; }
.measures thead th { height: 22px; }
.measures .lab { width: 54px; }
.measures .s25 { background: #f0c0f0; }
.measures .s50 { background: #f090f0; }
.measures .s75 { background: #f060f0; }
.measures .s100 { background: #f030f0; }
.measures .de td { background: #b0ffb0; font-weight: bold; }
.measures .de .warn { background: #ffffb0; }
.measures .g1 td { background: #f0f0f0; }
.measures .g2 td { background: #e0e0e0; }
.vbar { width: 17px; padding: 17px 7px; }
.vbar i { display: block; width: 2px; height: 141px; background: #808080; }
.hbar { display: flex; justify-content: space-between; padding: 5px 20px 0 6px; }
.al, .ar { border: 4px solid transparent; }
.al { border-right: 6px solid #a0a0a0; border-left: 0; }
.ar { border-left: 6px solid #a0a0a0; border-right: 0; }

.side { width: 84px; }
.radios label { gap: 6px; padding-left: 7px; }
input[type=radio] { appearance: none; width: 11px; height: 11px; margin: 0 0 4px; border: 1px solid #808080; border-color: #707070 #ddd #ddd #707070; border-radius: 50%; background: #fff; }
.off input[type=radio] { background: #f0f0f0; }
input[type=radio]:checked { background: radial-gradient(#000 0 2px, #fff 3px); }
.actions button { display: flex; align-items: center; width: 83px; height: 30px; padding-left: 4px; border: 1px solid; border-color: #fff #909090 #909090 #fff; background: #ebebeb; }
.actions svg { flex: none; width: 32px; height: 28px; }
.actions span { flex: 1; text-align: center; font-size: 14px; }
.edit { width: 56px; height: 18px; margin: 3px 0 0 5px; background: #ebebeb; }

.bottom { flex: 1; min-height: 0; }
.selected { width: 382px; }
.sel-body { display: flex; padding: 0 10px 6px 6px; }
.sel-left { width: 206px; padding-top: 2px; }
.lbl { height: 16px; padding-left: 4px; }
.levels { display: block; width: 200px; height: 86px; margin: 9px 0 14px; background: #f0f0f0; }
.lv text { font: 12px "Liberation Serif", serif; text-anchor: middle; }
.compare { display: flex; gap: 35px; width: 192px; height: 74px; margin: 0 0 14px 2px; padding-left: 19px; background: #f0f0f0; font: 14px/17px "Liberation Sans", Arial, sans-serif; }
.target { width: 116px; height: 90px; margin: 1px 0 0 36px; border: 1px solid #000; border-bottom: 0; background: conic-gradient(#40ff00, #ffc000 52deg, #f00 90deg, #ff0090 128deg, #8800c0 180deg, #00f 232deg, #0080a0 270deg, #00ff66 308deg, #40ff00); }
.target svg { display: block; }
.sel-right { display: flex; flex-direction: column; flex: 1; }
.cur { height: 19px; margin: 0 0 6px; padding-left: 21px; }
.cm-wrap { flex: 1; display: flex; min-height: 0; border: 2px solid; border-color: #707070 #fff #fff #707070; }
.cm-table { flex: 1; background: #a0a0a0; }
.cm-table th { width: 59px; height: 23px; padding: 0; border: 0 solid #606060; border-width: 0 1px 1px 0; background: #f0f0f0; font: bold 12px/16px "Noto Sans", sans-serif; }
.cm-table td { padding: 0; border: 0 solid #c0c0c0; border-width: 0 1px 1px 0; background: #fff; }
.cm-table .g td { background: #e0e0e0; }
.cm-table sup { font-size: 8px; line-height: 8px; }
.cm-bar { display: flex; flex-direction: column; justify-content: space-between; align-items: center; width: 17px; padding: 6px 0 5px; background: #f0f0f0; }
.cm-bar .tri.up { border: 4px solid transparent; border-top: 0; border-bottom: 6px solid #a0a0a0; }
.cm-bar .tri.down { border: 4px solid transparent; border-bottom: 0; border-top: 6px solid #a0a0a0; }

.information { flex: 1; min-width: 0; }
.info-body { display: flex; flex-direction: column; padding: 4px 0 6px 5px; }
.mode { width: 302px; }
.charts { flex: 1; min-height: 0; display: flex; gap: 2px; margin-top: 8px; padding-left: 2px; }
.chart { flex: 1; min-width: 0; overflow: hidden; border: 3px solid; border-color: #808080 #f4f4f4 #f4f4f4 #808080; background: linear-gradient(90deg, #202020, #808080 43%, #fff); }
.chart svg { display: block; }
.ax { font: 14px "Liberation Serif", serif; }
.title { font: bold 15px "Liberation Sans", Arial, sans-serif; fill: #d4d410; }
.mark { font: bold 16px "Liberation Sans", Arial, sans-serif; fill: #a0a0a0; }

.tabs { position: relative; display: flex; align-items: center; height: 20px; border-top: 1px solid #000; background: #f0f0f0; font: 10px/16px "Liberation Sans", Arial, sans-serif; }
.tabshape { position: absolute; left: 0; top: 0; width: 330px; height: 20px; }
.tabs button { position: relative; }
.nb { display: grid; place-items: center; width: 18px; height: 18px; border: 1px solid; border-color: #fff #404040 #404040 #fff; background: #f0f0f0; }
.nb svg { width: 8px; height: 8px; }
.t1 { width: 74px; font-weight: bold; font-size: 11px; }
.t2 { width: 42px; }
.t3 { width: 76px; }
.t4 { width: 68px; }
.badge { width: 14px; height: 14px; margin-left: auto; }
.refbox { margin-left: 80px; padding-right: 5px; font: 11px/16px "Liberation Sans", Arial, sans-serif; }

.status { display: flex; align-items: center; height: 19px; gap: 3px; background: linear-gradient(90deg, #e3eaf6, #eef3fb 40%); font: 12px/18px "Noto Sans", sans-serif; }
.ready { flex: 1; padding-left: 2px; }
.pane { height: 18px; padding-left: 2px; border: 1px solid #8fabcb; border-width: 1px 1px 0; }
.p1 { width: 76px; }
.p2 { width: 28px; }
.p3 { width: 34px; }
.p4 { width: 32px; border-right: 0; }
```
